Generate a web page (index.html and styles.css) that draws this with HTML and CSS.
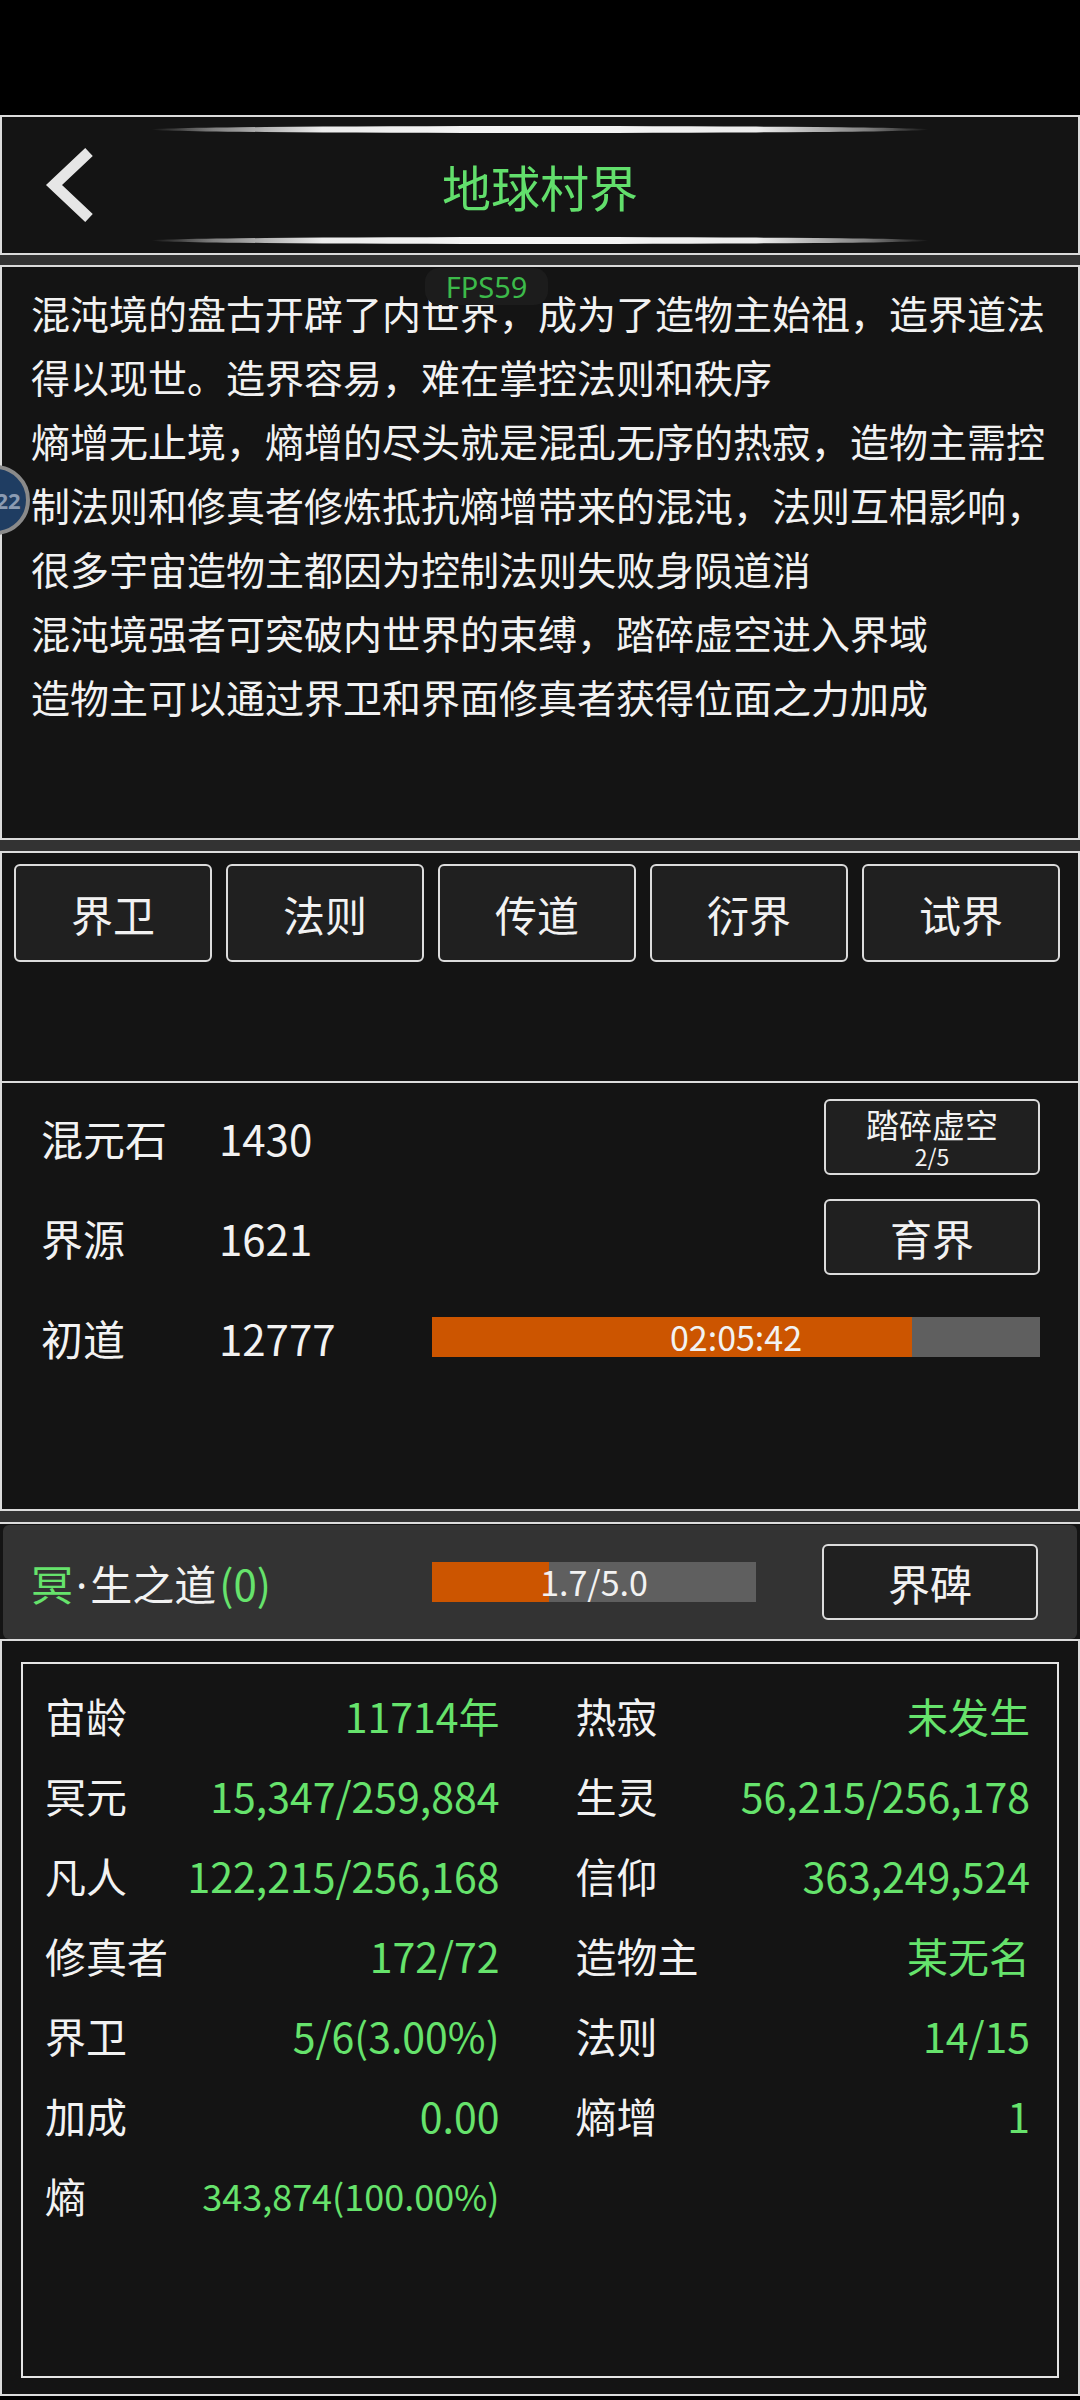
FILE: index.html
```html
<!DOCTYPE html>
<html lang="zh-CN">
<head>
    <meta charset="UTF-8">
    <meta name="viewport" content="width=device-width, initial-scale=1.0">
    <title>地球村界</title>
    <link rel="stylesheet" href="styles.css">
</head>

<body>
    <div class="status-bar"></div>

    <!-- title bar -->
    <header class="panel title-panel">
        <div class="back">
            <svg width="60" height="80" viewBox="0 0 60 80">
                <polyline points="47,7 12,40 47,73" fill="none" stroke="#e6e6e6" stroke-width="11"/>
            </svg>
        </div>
        <div class="title-center">
            <div class="glow-line"></div>
            <h1>地球村界</h1>
            <div class="glow-line"></div>
        </div>
        <div></div>
    </header>

    <div class="gap"></div>

    <section class="panel intro">
        <p>
            混沌境的盘古开辟了内世界，成为了造物主始祖，造界道法<br>
            得以现世。造界容易，难在掌控法则和秩序<br>
            熵增无止境，熵增的尽头就是混乱无序的热寂，造物主需控<br>
            制法则和修真者修炼抵抗熵增带来的混沌，法则互相影响，<br>
            很多宇宙造物主都因为控制法则失败身陨道消<br>
            混沌境强者可突破内世界的束缚，踏碎虚空进入界域<br>
            造物主可以通过界卫和界面修真者获得位面之力加成
        </p>
    </section>

    <div class="gap gap-wide"></div>

    <section class="panel world">
        <div class="tabs">
            <button class="tab">界卫</button>
            <button class="tab">法则</button>
            <button class="tab">传道</button>
            <button class="tab">衍界</button>
            <button class="tab">试界</button>
        </div>

        <div class="resources">
            <span class="res-label">混元石</span>
            <span class="res-value">1430</span>
            <button class="res-btn two-line">
                <span>踏碎虚空</span>
                <small>2/5</small>
            </button>

            <span class="res-label">界源</span>
            <span class="res-value">1621</span>
            <button class="res-btn">育界</button>

            <span class="res-label">初道</span>
            <span class="res-value">12777</span>
            <div class="bar timer-bar">
                <div class="bar-fill" style="width: 79%"></div>
                <span class="bar-text">02:05:42</span>
            </div>
        </div>
    </section>

    <div class="gap gap-wide"></div>

    <section class="realm">
        <div class="realm-box">
            <div class="realm-name"><span class="green">冥</span><span class="dot">·</span>生之道<span class="green">(0)</span></div>
            <div class="bar realm-bar">
                <div class="bar-fill" style="width: 36%"></div>
                <span class="bar-text">1.7/5.0</span>
            </div>
            <button class="res-btn">界碑</button>
        </div>
    </section>

    <section class="panel stats">
        <div class="stats-box">
            <div class="stat"><span>宙龄</span><span class="green">11714年</span></div>
            <div class="stat"><span>热寂</span><span class="green">未发生</span></div>
            <div class="stat"><span>冥元</span><span class="green">15,347/259,884</span></div>
            <div class="stat"><span>生灵</span><span class="green">56,215/256,178</span></div>
            <div class="stat"><span>凡人</span><span class="green">122,215/256,168</span></div>
            <div class="stat"><span>信仰</span><span class="green">363,249,524</span></div>
            <div class="stat"><span>修真者</span><span class="green">172/72</span></div>
            <div class="stat"><span>造物主</span><span class="green">某无名</span></div>
            <div class="stat"><span>界卫</span><span class="green">5/6(3.00%)</span></div>
            <div class="stat"><span>法则</span><span class="green">14/15</span></div>
            <div class="stat"><span>加成</span><span class="green">0.00</span></div>
            <div class="stat"><span>熵增</span><span class="green">1</span></div>
            <div class="stat"><span>熵</span><span class="green small">343,874(100.00%)</span></div>
        </div>
    </section>

    <!-- overlays -->
    <div class="fps">FPS59</div>
    <div class="float-ball">22</div>
</body>
</html>
```

FILE: styles.css
```css
body {
    margin: 0;
    background-color: #000;
    color: #f2f2f2;
    font-family: "Noto Sans CJK SC", "Noto Sans", sans-serif;
    position: relative;
    width: 1080px;
    height: 2400px;
    overflow: hidden;
}

.green {
    color: #66e36c;
}

.status-bar {
    height: 115px;
}

.panel {
    background-color: #141414;
    border: 2px solid #dcdcdc;
}

.gap {
    height: 10px;
    background-color: #333;
}

.gap-wide {
    height: 11px;
}

/* title */
.title-panel {
    height: 136px;
    display: grid;
    grid-template-columns: 149px 1fr 149px;
}

.back {
    display: flex;
    align-items: center;
    padding-left: 40px;
}

.back svg {
    display: block;
}

.title-center {
    display: flex;
    flex-direction: column;
    justify-content: space-between;
    padding: 9px 0;
}

.glow-line {
    height: 7px;
    border-radius: 50%;
    background: linear-gradient(to right, rgba(255,255,255,0) 0%, #808080 8%, #ececec 22%, #f6f6f6 50%, #ececec 78%, #808080 92%, rgba(255,255,255,0) 100%);
}

h1 {
    margin: 0;
    font-size: 49px;
    font-weight: normal;
    line-height: 1;
    text-align: center;
    color: #62df6c;
}

/* intro */
.intro {
    height: 571px;
}

.intro p {
    margin: 0;
    padding: 13px 29px;
    font-size: 39px;
    line-height: 64px;
    white-space: nowrap;
}

/* tabs + resources */
.tabs {
    height: 230px;
    box-sizing: border-box;
    display: flex;
    gap: 14px;
    padding: 11px 0 0 12px;
    border-bottom: 2px solid #dcdcdc;
}

button {
    font-family: inherit;
    color: #f2f2f2;
    background-color: #202020;
    border: 2px solid #dcdcdc;
    border-radius: 6px;
    padding: 0;
}

.tab {
    width: 198px;
    height: 98px;
    font-size: 42px;
}

.resources {
    height: 426px;
    box-sizing: border-box;
    display: grid;
    grid-template-columns: 178px 213px 1fr;
    grid-auto-rows: 100px;
    align-items: center;
    padding: 4px 38px 0 39px;
    font-size: 42px;
}

.res-btn {
    justify-self: end;
    width: 216px;
    height: 76px;
    font-size: 42px;
}

.two-line {
    display: flex;
    flex-direction: column;
    align-items: center;
    justify-content: center;
    gap: 2px;
    font-size: 33px;
    line-height: 36px;
}

.two-line small {
    font-size: 23px;
    line-height: 24px;
}

.bar {
    position: relative;
    height: 40px;
    background-color: #5f5f5f;
    display: flex;
    align-items: center;
    justify-content: center;
}

.bar-fill {
    position: absolute;
    left: 0;
    top: 0;
    bottom: 0;
    background-color: #cc5500;
}

.bar-text {
    position: relative;
    font-size: 34px;
    line-height: 1;
}

/* realm row */
.realm {
    background-color: #141414;
    border-top: 2px solid #dcdcdc;
    padding: 1px 3px 0;
}

.realm-box {
    height: 114px;
    box-sizing: border-box;
    background-color: #333;
    border-radius: 6px;
    display: flex;
    align-items: center;
    padding: 0 39px 0 28px;
}

.realm-name {
    width: 401px;
    font-size: 42px;
}

.realm-name .dot {
    font-family: "Noto Sans", sans-serif;
    margin: 0 3px;
}

.realm-name .green:last-child {
    margin-left: 3px;
}

.realm-bar {
    width: 324px;
}

.realm-box .res-btn {
    margin-left: auto;
}

/* stats */
.stats {
    height: 753px;
}

.stats-box {
    margin: 21px 19px 0;
    height: 716px;
    box-sizing: border-box;
    border: 2px solid #e6e6e6;
    display: grid;
    grid-template-columns: 1fr 1fr;
    grid-auto-rows: 80px;
    column-gap: 76px;
    align-content: start;
    padding: 11px 27px 0 22px;
}

.stat {
    display: flex;
    justify-content: space-between;
    align-items: center;
    font-size: 41px;
    white-space: nowrap;
}

.stat .small {
    font-size: 36px;
}

/* overlays */
.fps {
    position: absolute;
    left: 425px;
    top: 268px;
    width: 123px;
    height: 37px;
    border-radius: 14px;
    background-color: #1c1c1c;
    color: #3cba4a;
    font-family: "Noto Sans", sans-serif;
    font-size: 29px;
    line-height: 37px;
    text-align: center;
}

.float-ball {
    position: absolute;
    left: -40px;
    top: 465px;
    width: 62px;
    height: 62px;
    border: 4px solid #8a8a8a;
    border-radius: 50%;
    background-color: #1f3d62;
    color: #8b9bb2;
    font-family: "Noto Sans", sans-serif;
    font-size: 22px;
    font-weight: bold;
    line-height: 62px;
    text-align: center;
    text-indent: 26px;
}
```
